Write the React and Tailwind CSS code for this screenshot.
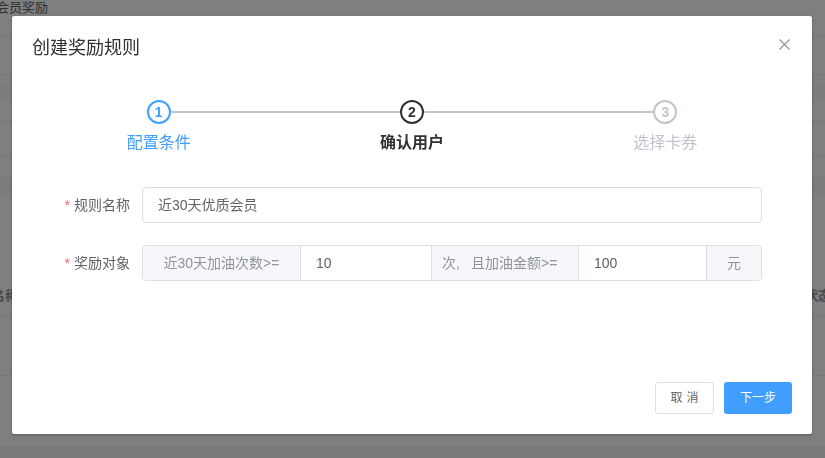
import React from "react";

const steps = [
  { n: 1, title: "配置条件", circle: "border-[#409eff] text-[#409eff]", text: "text-[#409eff]" },
  { n: 2, title: "确认用户", circle: "border-[#303133] text-[#303133]", text: "text-[#303133] font-bold" },
  { n: 3, title: "选择卡券", circle: "border-[#c0c4cc] text-[#c0c4cc]", text: "text-[#c0c4cc]" },
];

const Steps = () => (
  <div className="grid grid-cols-3">
    {steps.map((s, i) => (
      <div key={s.n} className="flex flex-col items-center">
        <div className="flex items-center w-full h-6">
          <div className={`flex-1 h-[2px] ${i === 0 ? "" : "bg-[#c0c4cc]"}`}></div>
          <div
            className={`w-6 h-6 rounded-full border-2 flex items-center justify-center text-[14px] font-bold leading-none bg-white ${s.circle}`}
          >
            {s.n}
          </div>
          <div className={`flex-1 h-[2px] ${i === steps.length - 1 ? "" : "bg-[#c0c4cc]"}`}></div>
        </div>
        <div className={`text-[16px] leading-[38px] ${s.text}`}>{s.title}</div>
      </div>
    ))}
  </div>
);

const Label = ({ children }) => (
  <div className="w-[110px] shrink-0 pr-3 text-right text-[14px] text-[#606266] leading-9">
    <span className="text-[#f56c6c] mr-1">*</span>
    {children}
  </div>
);

const Addon = ({ children, className = "" }) => (
  <div className={`bg-[#f5f7fa] text-[#909399] text-[14px] flex items-center h-full ${className}`}>
    {children}
  </div>
);

const Modal = () => (
  <div className="fixed inset-0 bg-black/50">
    <div className="absolute left-[12px] top-[16px] w-[800px] h-[418px] bg-white rounded-[2px] shadow-[0_1px_3px_rgba(0,0,0,0.3)] flex flex-col">
      <div className="flex items-start justify-between pt-5 px-5 pb-[10px]">
        <span className="text-[18px] leading-6 text-[#303133]">创建奖励规则</span>
        <button className="w-4 h-4 flex items-center justify-center">
          <svg width="11" height="11" viewBox="0 0 11 11">
            <path d="M0.5 0.5 L10.5 10.5 M10.5 0.5 L0.5 10.5" stroke="#909399" strokeWidth="1.2" />
          </svg>
        </button>
      </div>
      <div className="px-5 pt-[30px]">
        <Steps />
        <div className="mt-[25px] mr-[30px] flex flex-col gap-[22px]">
          <div className="flex items-center">
            <Label>规则名称</Label>
            <div className="flex-1 h-9 border border-[#dcdfe6] rounded pl-[15px] flex items-center text-[14px] text-[#606266]">
              近30天优质会员
            </div>
          </div>
          <div className="flex items-center">
            <Label>奖励对象</Label>
            <div className="flex-1 h-9 flex border border-[#dcdfe6] rounded overflow-hidden">
              <Addon className="w-[157px] justify-center">近30天加油次数&gt;=</Addon>
              <div className="w-[132px] border-x border-[#dcdfe6] pl-[15px] flex items-center text-[14px] text-[#606266]">
                10
              </div>
              <Addon className="w-[39px] pl-[10px]">次,</Addon>
              <Addon className="w-[107px]">且加油金额&gt;=</Addon>
              <div className="w-[129px] border-x border-[#dcdfe6] pl-[15px] flex items-center text-[14px] text-[#606266]">
                100
              </div>
              <Addon className="flex-1 justify-center">元</Addon>
            </div>
          </div>
        </div>
      </div>
      <div className="mt-auto flex justify-end gap-[10px] px-5 pb-5">
        <button className="h-8 w-[59px] border border-[#dcdfe6] rounded-[3px] text-[12px] text-[#606266] bg-white tracking-[4px] pl-[4px]">
          取消
        </button>
        <button className="h-8 w-[68px] rounded-[3px] text-[12px] text-white bg-[#409eff]">
          下一步
        </button>
      </div>
    </div>
  </div>
);

const Page = () => (
  <div className="h-[458px] overflow-hidden bg-white">
    <div className="text-[13px] leading-[16px] text-[#606266] ml-[-4px]">会员奖励</div>
    <div className="h-[19px]"></div>
    <div className="h-[40px] mx-[-8px] border border-[#ebeef5] rounded"></div>
    <div className="h-[8px]"></div>
    <div className="h-[17px] bg-[#f7f8fa]"></div>
    <div className="h-[22px] border-b border-[#ebeef5]"></div>
    <div className="h-[35px] border-b border-[#ebeef5]"></div>
    <div className="h-[20px]"></div>
    <div className="h-[19px] bg-[#f5f7fa]"></div>
    <div className="h-[80px]"></div>
    <div className="h-[40px] border-b border-[#ebeef5] flex items-start pt-[10px] justify-between text-[13px] font-bold text-[#909399]">
      <span className="ml-[-8px]">名称</span>
      <span className="mr-[-6px]">状态</span>
    </div>
    <div className="h-[60px] border-b border-[#ebeef5]"></div>
    <div className="h-[70px]"></div>
    <div className="h-[20px] bg-[#f0f2f5]"></div>
  </div>
);

export default function App() {
  return (
    <div className="relative w-full h-[458px] overflow-hidden font-['Liberation_Sans','Noto_Sans_CJK_SC',sans-serif]">
      <Page />
      <Modal />
    </div>
  );
}
